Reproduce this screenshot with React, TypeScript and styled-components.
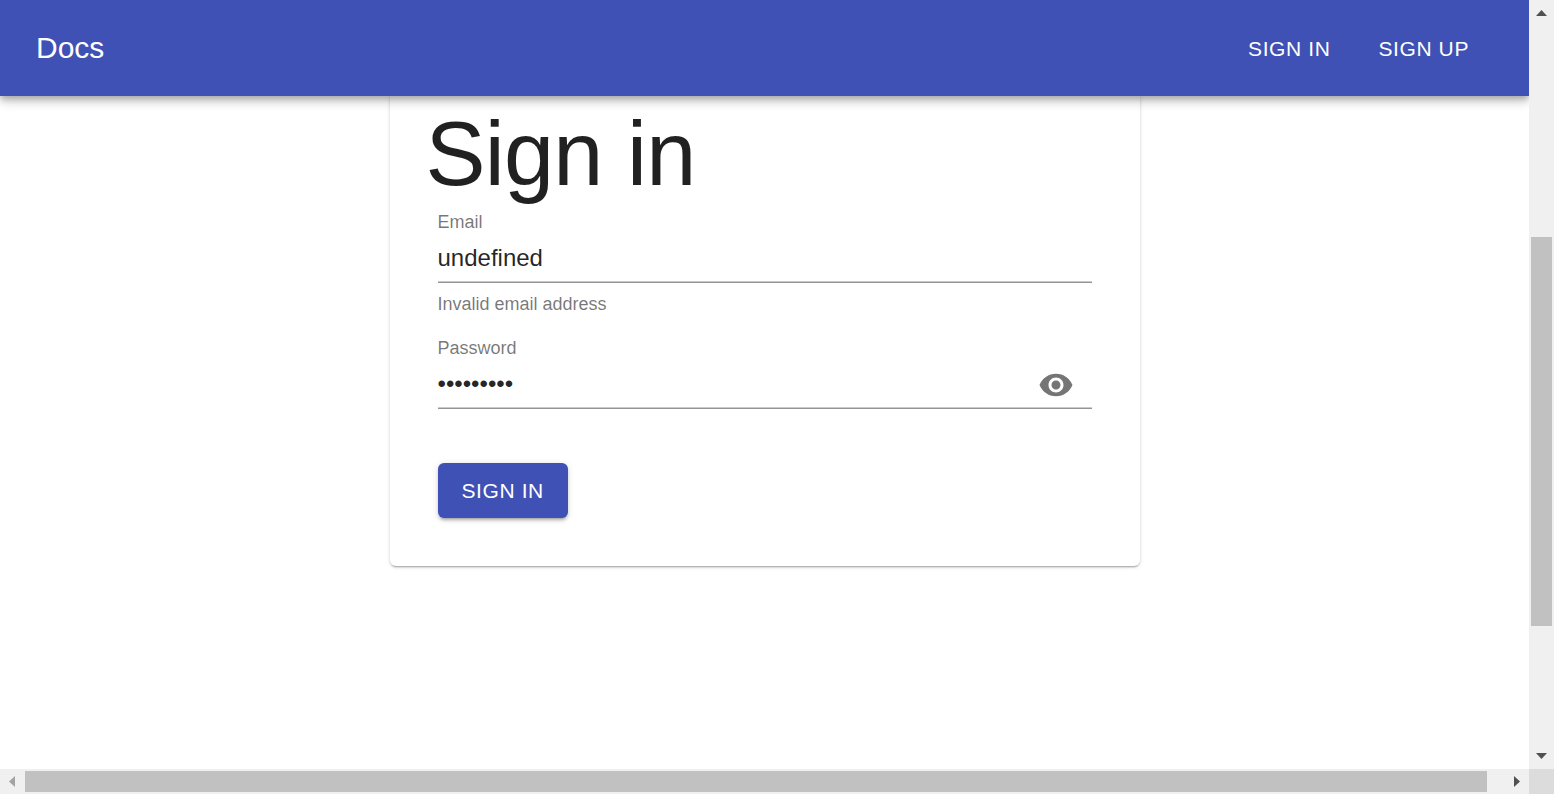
import React, { useState } from "react";
import styled, { createGlobalStyle, css } from "styled-components";

const primary = "#3f51b5";

const GlobalStyle = createGlobalStyle`
  *, *::before, *::after { box-sizing: border-box; }
  body {
    margin: 0;
    background: #fff;
    color: rgba(0, 0, 0, 0.87);
    font-family: Arial, "Liberation Sans", sans-serif;
  }
`;

const Window = styled.div`
  display: grid;
  grid-template: minmax(0, 1fr) 25px / minmax(0, 1fr) 25px;
  height: 100vh;
`;

const Viewport = styled.div`
  display: flex;
  flex-direction: column;
  overflow: hidden;
`;

const AppBar = styled.header`
  position: relative;
  z-index: 1;
  display: flex;
  align-items: center;
  justify-content: space-between;
  flex: none;
  min-height: 96px;
  padding: 0 48px 0 36px;
  background: ${primary};
  color: #fff;
  box-shadow: 0 3px 6px -1px rgba(0, 0, 0, 0.2), 0 6px 8px 0 rgba(0, 0, 0, 0.14),
    0 2px 15px 0 rgba(0, 0, 0, 0.12);
`;

const Brand = styled.span`
  font-size: 30px;
  line-height: 48px;
`;

const Nav = styled.nav`
  display: flex;
  gap: 24px;
`;

const buttonText = css`
  font-family: inherit;
  font-size: 21px;
  line-height: 37px;
  font-weight: 500;
  letter-spacing: 0.02857em;
  text-transform: uppercase;
`;

const NavLink = styled.a`
  ${buttonText}
  padding: 9px 12px;
  color: inherit;
  text-decoration: none;
`;

const Card = styled.main`
  align-self: center;
  width: 100%;
  max-width: 750px;
  padding: 4px 36px 48px;
  background: #fff;
  border-radius: 0 0 6px 6px;
  box-shadow: 0 3px 2px -2px rgba(0, 0, 0, 0.2), 0 1px 2px 0 rgba(0, 0, 0, 0.14),
    0 1px 4px 0 rgba(0, 0, 0, 0.12);
`;

const Title = styled.h1`
  margin: 0;
  font-size: 90px;
  line-height: 108px;
  font-weight: 300;
  letter-spacing: -0.00833em;
`;

const Form = styled.form`
  display: flex;
  flex-direction: column;
  align-items: flex-start;
  gap: 20px;
  padding: 5px 12px 0;
`;

const Field = styled.div`
  display: flex;
  flex-direction: column;
  width: 100%;
`;

const Label = styled.label`
  color: rgba(0, 0, 0, 0.54);
  font-size: 18px;
  line-height: 18px;
`;

const InputRow = styled.div`
  display: flex;
  align-items: center;
  height: 52px;
  border-bottom: 1px solid #949494;
  box-shadow: inset 0 -1px 0 #cacaca;
`;

const Input = styled.input`
  flex: 1;
  min-width: 0;
  height: 48px;
  padding: 3px 0 0;
  border: 0;
  outline: 0;
  background: none;
  color: inherit;
  font-family: inherit;
  font-size: 24px;
`;

const HelperText = styled.p`
  margin: 6px 0 0;
  color: rgba(0, 0, 0, 0.54);
  font-size: 18px;
  line-height: 30px;
`;

const IconButton = styled.button`
  display: flex;
  padding: 4px 18px 0;
  border: 0;
  background: none;
  color: #757575;
  cursor: pointer;
`;

const SubmitButton = styled.button`
  ${buttonText}
  margin-top: 34px;
  padding: 9px 24px;
  border: 0;
  border-radius: 6px;
  background: ${primary};
  color: #fff;
  cursor: pointer;
  box-shadow: 0 4px 2px -3px rgba(0, 0, 0, 0.2), 0 3px 3px 0 rgba(0, 0, 0, 0.14),
    0 1px 7px 0 rgba(0, 0, 0, 0.12);
`;

const Scrollbar = styled.div<{ $vertical?: boolean }>`
  display: flex;
  flex-direction: ${(p) => (p.$vertical ? "column" : "row")};
  background: #f0f0f0;
`;

const ArrowButton = styled.button<{ $disabled?: boolean }>`
  display: flex;
  flex: none;
  width: 25px;
  height: 25px;
  padding: 0;
  border: 0;
  background: none;
  color: ${(p) => (p.$disabled ? "#a3a3a3" : "#505050")};
`;

const Track = styled.div<{ $grow: number }>`
  flex: ${(p) => p.$grow} 0 0;
`;

const Thumb = styled(Track)<{ $vertical?: boolean }>`
  margin: ${(p) => (p.$vertical ? "0 2px" : "2px 0")};
  background: #c1c1c1;
`;

const Corner = styled.div`
  background: #dcdcdc;
`;

const arrows = {
  up: "M7 16 12.5 10 18 16Z",
  down: "M7 9 12.5 15 18 9Z",
  left: "M15 7 9 12.5 15 18Z",
  right: "M10 7 16 12.5 10 18Z",
};

function Arrow({ direction, disabled }: { direction: keyof typeof arrows; disabled?: boolean }) {
  return (
    <ArrowButton type="button" aria-label={`Scroll ${direction}`} $disabled={disabled} disabled={disabled}>
      <svg width="25" height="25" viewBox="0 0 25 25" fill="currentColor">
        <path d={arrows[direction]} />
      </svg>
    </ArrowButton>
  );
}

export default function App() {
  const [email, setEmail] = useState("undefined");
  const [password, setPassword] = useState("undefined");
  const [visible, setVisible] = useState(false);

  return (
    <Window>
      <GlobalStyle />
      <Viewport>
        <AppBar>
          <Brand>Docs</Brand>
          <Nav>
            <NavLink href="#signin">Sign in</NavLink>
            <NavLink href="#signup">Sign up</NavLink>
          </Nav>
        </AppBar>
        <Card>
          <Title>Sign in</Title>
          <Form onSubmit={(e) => e.preventDefault()} noValidate>
            <Field>
              <Label htmlFor="email">Email</Label>
              <InputRow>
                <Input
                  id="email"
                  type="text"
                  value={email}
                  spellCheck={false}
                  aria-describedby="email-help"
                  onChange={(e) => setEmail(e.target.value)}
                />
              </InputRow>
              <HelperText id="email-help">Invalid email address</HelperText>
            </Field>
            <Field>
              <Label htmlFor="password">Password</Label>
              <InputRow>
                <Input
                  id="password"
                  type={visible ? "text" : "password"}
                  value={password}
                  onChange={(e) => setPassword(e.target.value)}
                />
                <IconButton
                  type="button"
                  aria-label="Toggle password visibility"
                  onClick={() => setVisible(!visible)}
                >
                  <svg width="36" height="36" viewBox="0 0 24 24" fill="currentColor">
                    <path d="M12 4.5C7 4.5 2.73 7.61 1 12c1.73 4.39 6 7.5 11 7.5s9.27-3.11 11-7.5c-1.73-4.39-6-7.5-11-7.5zM12 17c-2.76 0-5-2.24-5-5s2.24-5 5-5 5 2.24 5 5-2.24 5-5 5zm0-8c-1.66 0-3 1.34-3 3s1.34 3 3 3 3-1.34 3-3-1.34-3-3-3z" />
                  </svg>
                </IconButton>
              </InputRow>
            </Field>
            <SubmitButton type="submit">Sign in</SubmitButton>
          </Form>
        </Card>
      </Viewport>
      <Scrollbar $vertical>
        <Arrow direction="up" />
        <Track $grow={212} />
        <Thumb $grow={389} $vertical />
        <Track $grow={118} />
        <Arrow direction="down" />
      </Scrollbar>
      <Scrollbar>
        <Arrow direction="left" disabled />
        <Thumb $grow={1462} />
        <Track $grow={17} />
        <Arrow direction="right" />
      </Scrollbar>
      <Corner />
    </Window>
  );
}
